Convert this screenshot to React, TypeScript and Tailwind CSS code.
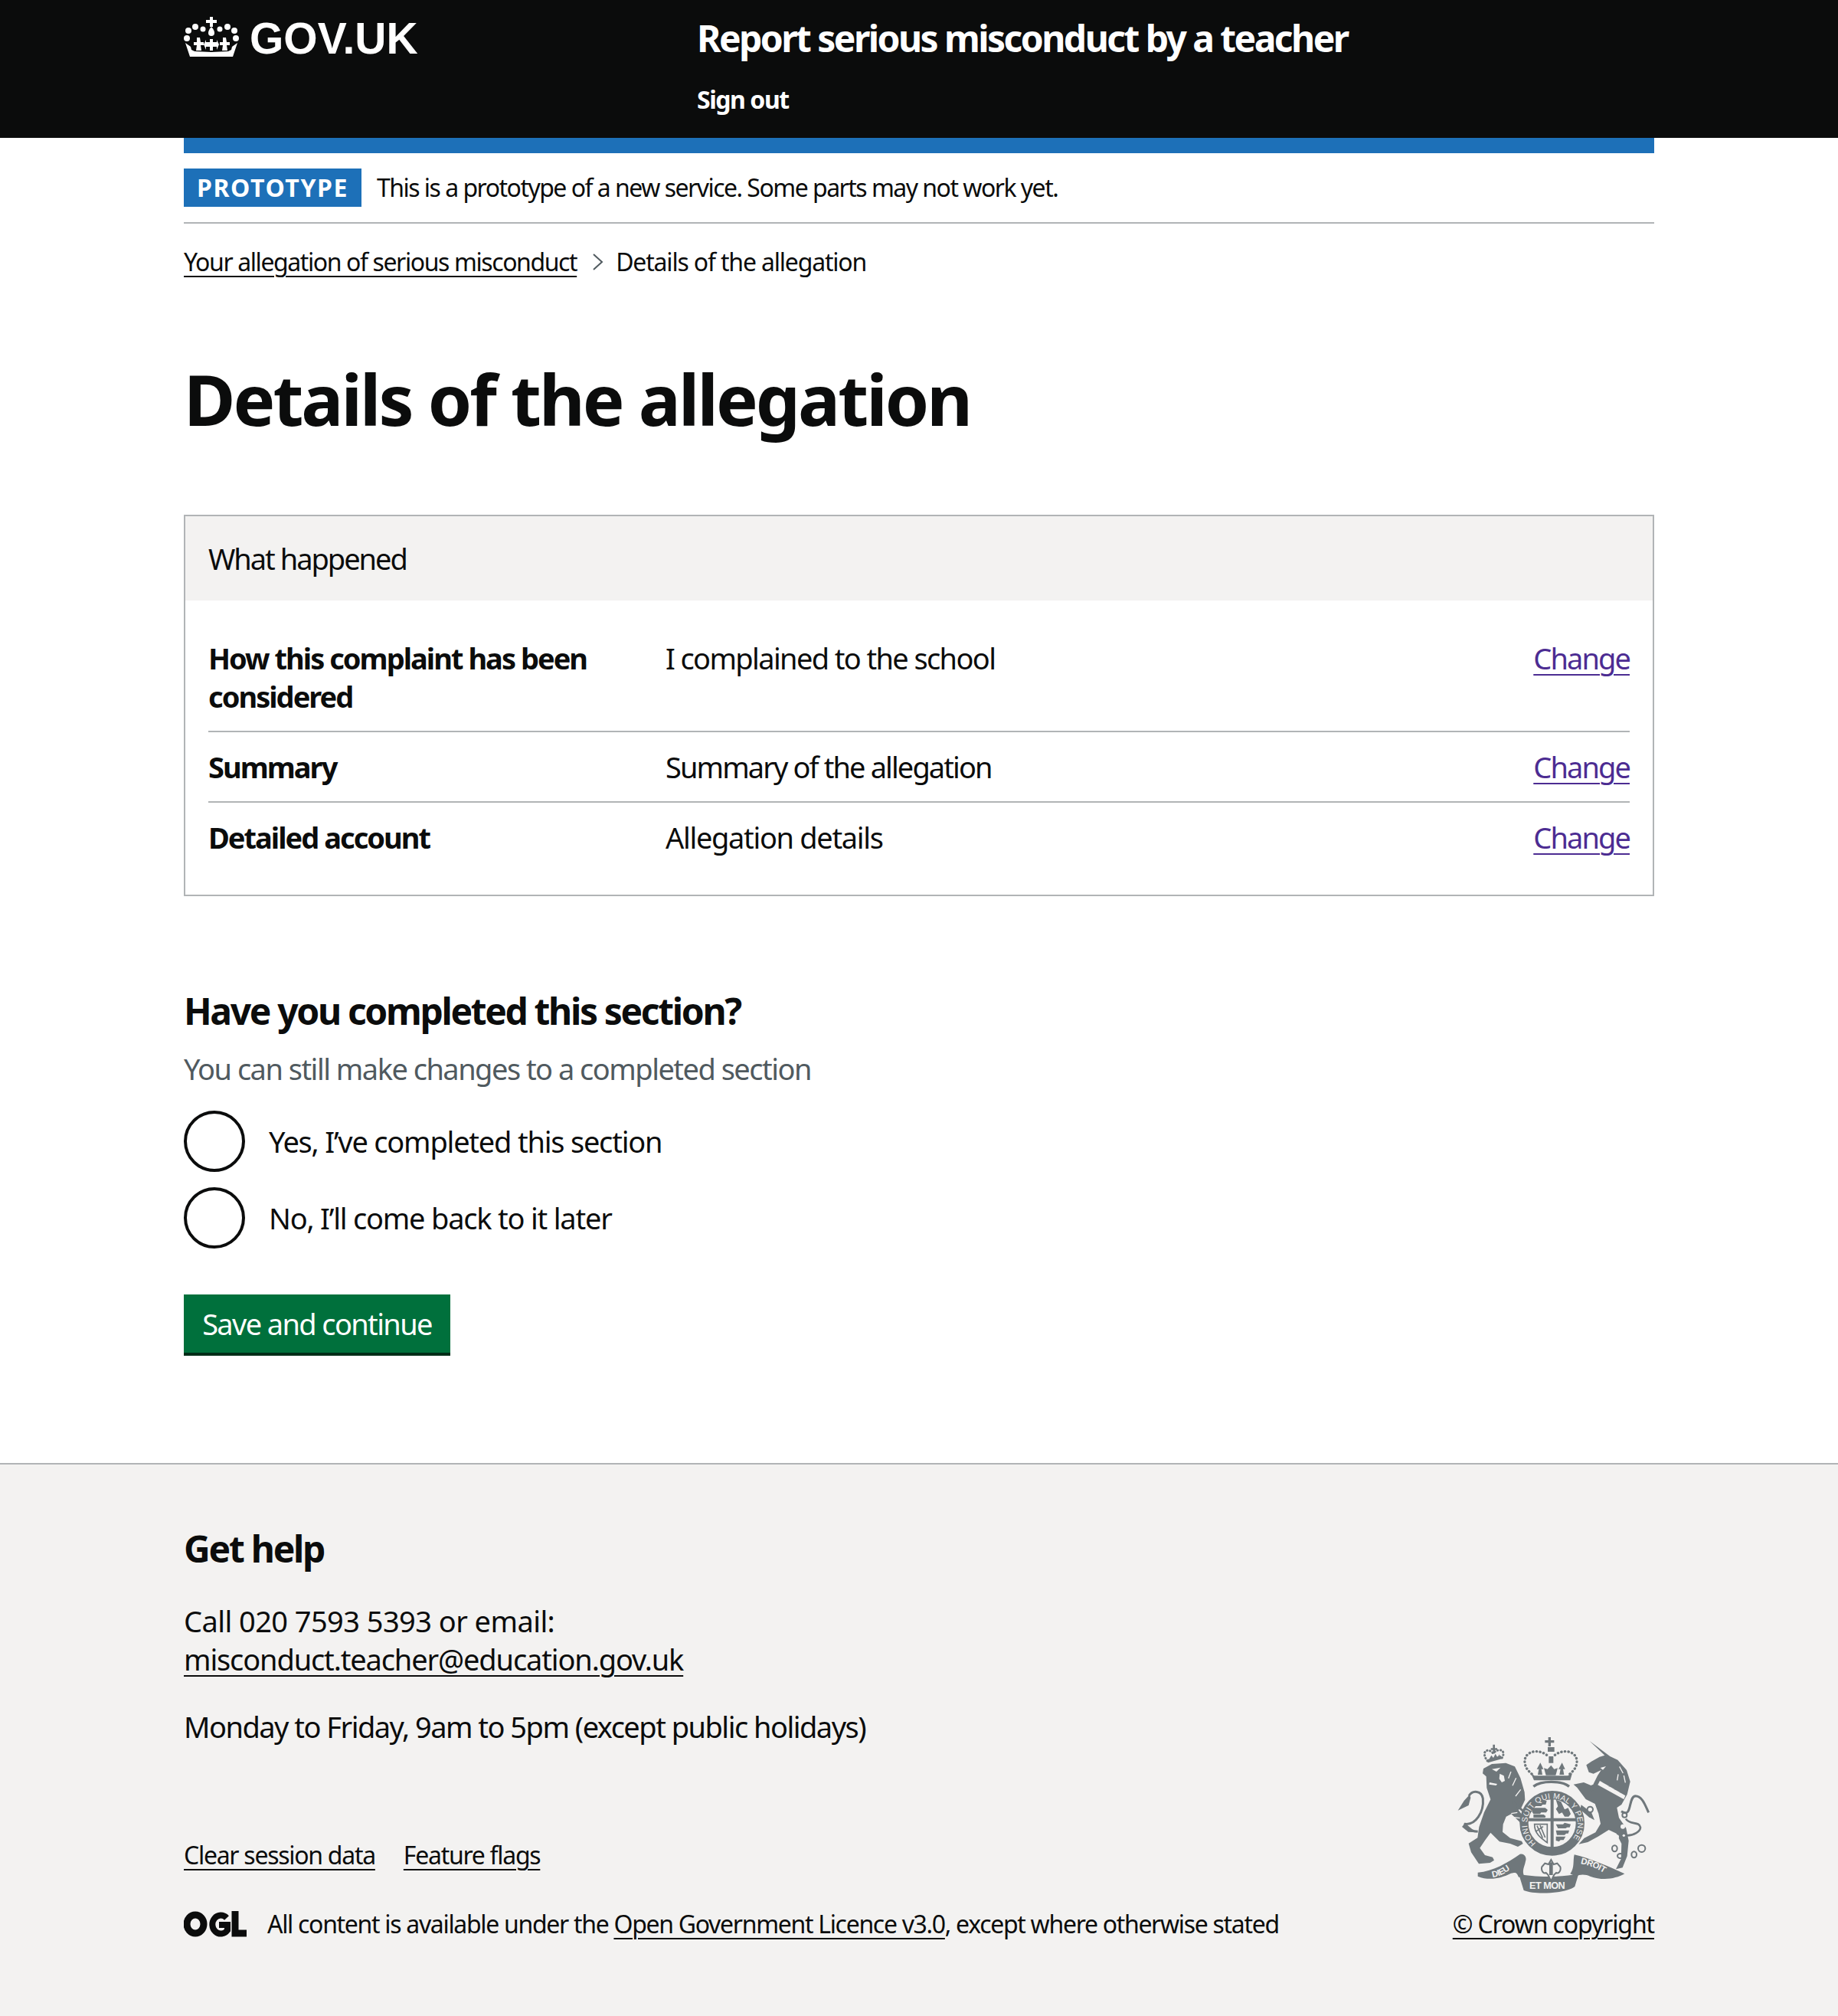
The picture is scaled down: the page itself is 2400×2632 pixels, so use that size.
import React from "react"

const link = "underline decoration-2 underline-offset-[6px]"

function Crown() {
  const dots: [number, number, number][] = [
    [6, 18, 4], [15, 13, 4], [25, 16, 3.5], [47, 16, 3.5], [57, 13, 4], [66, 18, 4], [4, 28, 4], [68, 28, 4],
  ]
  return (
    <svg width="72" height="52" viewBox="0 0 72 52" fill="#fff" aria-hidden="true">
      {dots.map(([cx, cy, r], i) => (
        <circle key={i} cx={cx} cy={cy} r={r} />
      ))}
      <path d="M34 0h4v4h5v4h-5v5h-4V8h-5V4h5z" />
      <path d="M36 13c3 3 4 6 4 8a4 4 0 0 1-8 0c0-2 1-5 4-8z" />
      <path d="M34 29h4v4h5v-3l3 6-3 7v-4h-5v5h-4v-5h-5v4l-3-7 3-6v3h5z" />
      <path d="M17 27h4l1 6h4v4h-4l1 7h-7l1-7h-4v-4h4z" />
      <path d="M51 27h4l1 6h4v4h-4l1 7h-7l1-7h-4v-4h4z" />
      <path d="M2 34l7 5 1 4 4 2 22 1 22-1 4-2 1-4 7-5-6 18H8z" />
    </svg>
  )
}

function OglLogo() {
  return (
    <svg width="82" height="34" viewBox="0 0 82 34" fill="none" stroke="#0b0c0c" aria-label="OGL">
      <ellipse cx="15" cy="17" rx="11" ry="12" strokeWidth="9" />
      <path d="M56 9a11 12 0 1 0 1 16v-7H46" strokeWidth="8" />
      <path d="M67 0v29h15" strokeWidth="9" />
    </svg>
  )
}

function Crest() {
  const c = "#6f777b"
  const bg = "#f3f2f1"
  return (
    <svg width="251" height="204" viewBox="70 55 753 612" aria-label="Royal coat of arms">
      <defs>
        <path id="ring-text" d="M378 470A99 99 0 1 1 512 465" />
        <path id="rib-left" d="M208 604q55-8 100-62" />
        <path id="rib-right" d="M552 550q65 12 118 56" />
      </defs>
      {/* lion */}
      <path fill={c} d="M172 178l33-18 55-4 35 14 22 45 16 55 2 30-14 30-12 10 30 40 12 38-18-6-22-28-30-28-20 10-12 30-2 30 30 24 45 12 5 10-20 12-30-12-42-8-35-35-22 30-20 30 20 28 30 8 6 12-16 10-44 4-30-45-10-35 35-22 6-42 20-58 25-50-15-45-2-45-14-12z" />
      <path fill={bg} d="M205 180l34-6-16 16zM236 198l16 8 4 20-12 6-10-14zM196 232l30 6-4 6-28-4z" />
      <path fill="none" stroke={bg} strokeWidth="4" d="M300 215l-14 30M318 260l-20 26M280 190l-10 26M305 350l-24 4M315 372l-28-4" />
      <path fill="none" stroke={c} strokeWidth="9" d="M150 425c-40-5-55-20-50-30 40 5 75-45 70-100-5-30-40-35-55-10" />
      <path fill={c} d="M118 280l-22 24-24 38 42-20 8-30zM100 392l-12 14 25 20 30 2z" />
      {/* lion crown */}
      <g fill="none" stroke={c} strokeWidth="9" strokeDasharray="1 11" strokeLinecap="round">
        <path d="M188 148c-28-35 0-55 22-30 25-25 55-10 32 22" />
      </g>
      <path fill={c} d="M186 143l54-16 6 12-56 16zM201 98h8V84h8v14h9v7h-9v14h-8v-14h-8zM195 140l8-14 8 10 8-16 8 14 8-12 2 14z" />
      {/* unicorn */}
      <path fill={c} d="M588 70l80 60 30 14 35 40 14 45-12 50-22 40-18 12 8 40 28 40 10 50-6 60-18 45-26 6 20-40 2-60-20-40-30-14-42 26-40 22-36 8 22-24 44-22 20-34-8-40-14-38-36-18-34-46-14-12 40-8 34 14 20-40 14-22-30 14-18-6-10-28 20-14 32-18 20-6z" />
      <path fill={bg} d="M628 226l100 58-6 14-102-56z" />
      <path fill={c} d="M638 234h8v-9l4 2v9zM660 247h8v-9l4 2v9zM682 260h8v-9l4 2v9zM704 272h8v-9l4 2v9z" />
      <path fill={bg} d="M630 175l22-6-12 14z" />
      <path fill="none" stroke={bg} strokeWidth="4" d="M705 170l14 26M722 205l6 28M700 200l-4 24" />
      <g fill={bg}>
        <circle cx="718" cy="405" r="9" />
        <circle cx="695" cy="445" r="8" />
        <circle cx="722" cy="440" r="5" />
      </g>
      <g fill="none" stroke={c} strokeWidth="6">
        <path d="M712 345c45 30 25-55 55-60 28 0 40 40 52 65" strokeWidth="9" />
        <path d="M735 440c25 0 52-15 52-32-5-25-42-8-57-33" strokeWidth="8" />
        <circle cx="603" cy="255" r="11" />
        <circle cx="725" cy="360" r="9" />
        <ellipse cx="686" cy="491" rx="10" ry="12" />
        <ellipse cx="709" cy="520" rx="12" ry="9" />
        <ellipse cx="762" cy="515" rx="10" ry="12" />
        <circle cx="792" cy="491" r="14" />
      </g>
      {/* main crown */}
      <path fill={c} d="M426 55h10v12h13v10h-13v14h-10V77h-13V67h13zM424 94h26v18h-26zM428 130h18v26h-18z" />
      <g fill="none" stroke={c} strokeWidth="10" strokeDasharray="1 13" strokeLinecap="round">
        <path d="M420 125c-40-30-95-10-85 35 3 15 10 25 28 40" />
        <path d="M452 125c40-30 95-10 85 35-3 15-10 25-28 40" />
      </g>
      <path fill={c} d="M395 155l12 25h-8l4 22h-18l4-22h-8zM437 165l12 15 14-4-8 28h-38l-8-28 14 4zM480 155l12 25h-8l4 22h-18l4-22h-8z" />
      <path fill={c} d="M358 196l14 10 130 0 18-10-8 28H370z" />
      <path fill="none" stroke={c} strokeWidth="10" d="M368 248c30-24 110-24 140 0" />
      {/* shield, then the garter ring over its corners */}
      <circle cx="441" cy="392" r="100" fill={bg} />
      <path fill={c} d="M435 288h12v204h-12zM346 372h190v12H346z" />
      <g fill={c}>
        <path d="M364 305h20l6-6 30 6-4 14h-12l-6 6h-26l-8-8zM364 332h50l10 8-6 10h-20l-4 6h-26l-6-10zM368 358h40l8 6-2 6h-46z" />
        <path d="M456 300l20 8 14 30 14-6 10 24-8 10h-16l-10-16-12 6-12-20 8-10z" />
        <path d="M456 396h28l6-6 24 6-4 12h-10l-6 4h-30zM456 420h52l-4 12h-8l-6 6h-30zM456 444h38l-8 14h-12l-6 6-12-4z" />
      </g>
      <g fill="none" stroke={c} strokeWidth="5">
        <path d="M372 396h50v72c-25-18-50-35-50-72z" />
        <path d="M382 402l22 48M394 400l20 48M376 425l30-20" />
      </g>
      <circle cx="441" cy="392" r="110" fill="none" stroke={c} strokeWidth="34" />
      <g fill={bg} fontFamily="'Liberation Sans', sans-serif" fontSize="31">
        <text>
          <textPath href="#ring-text" textLength="455">HONI SOIT QUI MAL Y PENSE</textPath>
        </text>
      </g>
      {/* foreleg and chain over the ring */}
      <path fill={c} d="M290 305l50 45-6 6-50-44z" />
      <path fill={c} d="M555 320l40 30 12 30-22-12-34-30z" />
      <circle cx="590" cy="338" r="11" fill={bg} stroke={c} strokeWidth="6" />
      {/* motto scrolls */}
      <path fill={c} d="M150 585c60-5 120-40 165-72 18-5 28 14 22 28-5 25-15 35-5 60l-22 2c-8-18-10-20-30-15-40 20-85 30-130 12z" />
      <path fill={c} d="M310 590c55 15 170 15 235 0l-15 50c-30 25-150 35-200 15z" />
      <path fill={c} d="M528 515c62 15 132 45 197 75-35 20-85 28-135 10-15-8-40-10-55 0l-23-10c18-25 10-50 16-75z" />
      <path fill={bg} stroke={c} strokeWidth="6" d="M437 535l10 18 14-4 12 14c4 15-6 28-16 23l-8 8-12 24-12-24-8-8c-10 5-20-8-16-23l12-14 14 4z" />
      <path fill={c} d="M430 545h14v50h-14z" />
      <g fill={bg} fontFamily="'Liberation Sans', sans-serif" fontWeight="700" fontSize="34">
        <text>
          <textPath href="#rib-left">DIEU</textPath>
        </text>
        <text x="352" y="650" fontSize="38">ET MON</text>
        <text>
          <textPath href="#rib-right">DROIT</textPath>
        </text>
      </g>
    </svg>
  )
}

function SummaryRow({ label, value, valueClass, last }: { label: React.ReactNode; value: string; valueClass?: string; last?: boolean }) {
  return (
    <div className={`flex py-5 ${last ? "" : "border-b-2 border-[#b1b4b6]"}`}>
      <dt className="w-[597px] shrink-0 font-bold tracking-[-0.052em]">{label}</dt>
      <dd className={`flex-1 ${valueClass ?? ""}`}>{value}</dd>
      <dd>
        <a className={`${link} text-[#4c2c92] tracking-[-0.05em]`}>Change</a>
      </dd>
    </div>
  )
}

function Radio({ label }: { label: string }) {
  return (
    <label className="flex h-[80px] items-center gap-[31px]">
      <span className="h-[80px] w-[80px] rounded-full border-4 border-[#0b0c0c]" />
      <span className="tracking-[-0.032em]">{label}</span>
    </label>
  )
}

export default function App() {
  return (
    <div className="min-h-[2632px] bg-white font-['Noto_Sans',sans-serif] text-[38px] leading-[50px] tracking-[-0.04em] text-[#0b0c0c]">
      <header className="h-[180px] bg-[#0b0c0c] text-white">
        <div className="mx-auto flex w-[1920px]">
          <div className="flex w-[670px] items-start gap-[14px] pt-[22px]">
            <Crown />
            <span className="font-['Liberation_Sans',sans-serif] text-[57px] font-bold leading-[56px] tracking-normal">GOV.UK</span>
          </div>
          <div>
            <div className="pt-[20px] text-[48px] font-bold leading-[60px] tracking-[-0.0535em]">Report serious misconduct by a teacher</div>
            <div className="pt-[30px] text-[32px] font-bold leading-[40px] tracking-[-0.045em]">Sign out</div>
          </div>
        </div>
      </header>

      <div className="mx-auto w-[1920px]">
        <div className="h-[20px] bg-[#1d70b8]" />
        <div className="flex items-center gap-5 border-b-2 border-[#b1b4b6] pb-[20px] pt-[20px] text-[32px] leading-[50px]">
          <strong className="flex h-[50px] w-[232px] items-center justify-center bg-[#1d70b8] text-[32px] font-bold tracking-[0.05em] text-white">PROTOTYPE</strong>
          <span>This is a prototype of a new service. Some parts may not work yet.</span>
        </div>

        <nav className="flex items-center pt-[30px] text-[32px] leading-[40px]">
          <a className={`${link} tracking-[-0.044em]`}>Your allegation of serious misconduct</a>
          <svg width="16" height="28" viewBox="0 0 16 28" fill="none" stroke="#505a5f" strokeWidth="2" className="ml-[20px] mr-[15px]">
            <path d="M2 4l11 10L2 24" />
          </svg>
          <span className="tracking-[-0.037em]">Details of the allegation</span>
        </nav>

        <h1 className="pt-[109px] text-[92px] font-bold leading-[100px] tracking-[-0.032em]">Details of the allegation</h1>

        <section className="mt-[101px] border-2 border-[#b1b4b6]">
          <div className="flex h-[110px] items-center bg-[#f3f2f1] px-[30px] tracking-[-0.053em]">What happened</div>
          <dl className="px-[30px] py-[30px]">
            <SummaryRow
              label={
                <>
                  How this complaint has been
                  <br />
                  considered
                </>
              }
              value="I complained to the school"
              valueClass="tracking-[-0.043em]"
            />
            <SummaryRow label="Summary" value="Summary of the allegation" valueClass="tracking-[-0.05em]" />
            <SummaryRow label="Detailed account" value="Allegation details" valueClass="tracking-[-0.035em]" last />
          </dl>
        </section>

        <h2 className="pt-[120px] text-[48px] font-bold leading-[60px] tracking-[-0.049em]">Have you completed this section?</h2>
        <p className="mt-[20px] text-[#505a5f]">You can still make changes to a completed section</p>
        <div className="mt-[30px] flex flex-col gap-5">
          <Radio label="Yes, I’ve completed this section" />
          <Radio label="No, I’ll come back to it later" />
        </div>

        <button type="button" className="mt-[60px] flex h-[80px] w-[348px] items-center justify-center border-b-4 border-[#002d18] bg-[#00703c] tracking-[-0.043em] text-white">
          Save and continue
        </button>
      </div>

      <footer className="mt-[140px] h-[722px] border-t-2 border-[#b1b4b6] bg-[#f3f2f1]">
        <div className="mx-auto flex w-[1920px] items-end justify-between pt-[80px]">
          <div>
            <h2 className="text-[48px] font-bold leading-[60px] tracking-[-0.047em]">Get help</h2>
            <p className="mt-[39px]">
              <span className="tracking-[-0.015em]">Call 020 7593 5393 or email:</span>
              <br />
              <a className={`${link} tracking-[-0.03em]`}>misconduct.teacher@education.gov.uk</a>
            </p>
            <p className="mt-[38px]">Monday to Friday, 9am to 5pm (except public holidays)</p>
            <div className="mt-[123px] flex gap-[37px] text-[32px] leading-[40px] tracking-[-0.04em]">
              <a className={link}>Clear session data</a>
              <a className={link}>Feature flags</a>
            </div>
            <div className="mt-[50px] flex items-center gap-[27px] text-[32px] leading-[40px] tracking-[-0.041em]">
              <OglLogo />
              <span>
                All content is available under the <a className={link}>Open Government Licence v3.0</a>, except where otherwise stated
              </span>
            </div>
          </div>
          <div className="flex flex-col items-end">
            <div className="mr-[6px] flex">
              <Crest />
            </div>
            <a className={`${link} mt-[20px] text-[32px] leading-[40px] tracking-[-0.035em]`}>© Crown copyright</a>
          </div>
        </div>
      </footer>
    </div>
  )
}
